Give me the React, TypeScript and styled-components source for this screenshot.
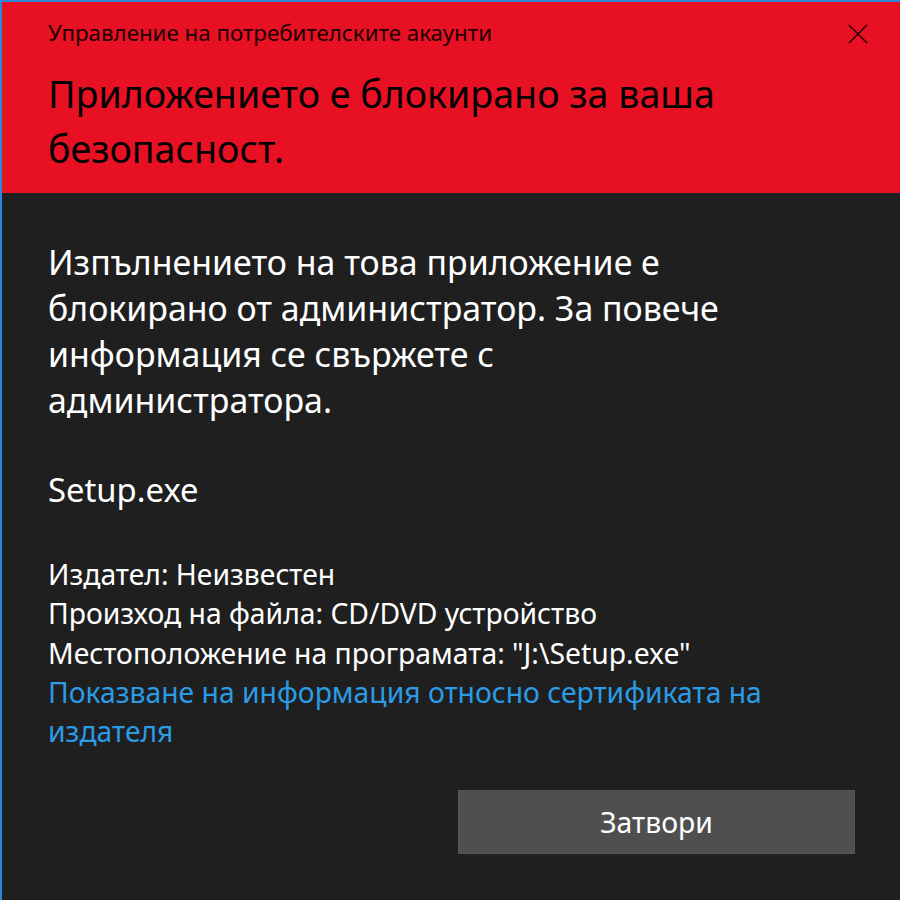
import React from "react";
import styled, { createGlobalStyle } from "styled-components";

const Global = createGlobalStyle`
  html, body { margin: 0; padding: 0; background: #1f1f1f; }
  * { box-sizing: border-box; }
`;

const Window = styled.div`
  width: 900px;
  height: 900px;
  border-left: 2px solid #2b88d8;
  border-top: 2px solid #2b88d8;
  background: #1f1f1f;
  display: flex;
  flex-direction: column;
  font-family: "Noto Sans", "Open Sans", sans-serif;
  overflow: hidden;
`;

const Header = styled.div`
  background: #e81123;
  height: 191px;
  padding: 16px 0 0 46px;
  display: flex;
  flex-direction: column;
  position: relative;
`;

const Caption = styled.div`
  color: #1a0000;
  font-size: 22.3px;
  line-height: 30px;
`;

const Title = styled.h1`
  margin: 18px 0 0;
  color: #000;
  font-size: 37.6px;
  font-weight: 400;
  line-height: 55px;
  max-width: 720px;
`;

const CloseButton = styled.div`
  position: absolute;
  top: 22px;
  right: 32px;
  width: 20px;
  height: 20px;
  display: flex;
  align-items: center;
  justify-content: center;
`;

const Body = styled.div`
  flex: 1;
  display: flex;
  flex-direction: column;
  padding: 46px 0 0 46px;
  color: #fff;
`;

const Message = styled.p`
  margin: 0;
  font-size: 33.9px;
  line-height: 46px;
  max-width: 700px;
`;

const FileName = styled.div`
  margin-top: 47px;
  font-size: 32.8px;
  line-height: 40px;
`;

const Details = styled.div`
  margin-top: 45px;
  display: flex;
  flex-direction: column;
  font-size: 28.3px;
  line-height: 39.3px;
  max-width: 800px;
`;

const Link = styled.span`
  color: #2b9be6;
`;

const Footer = styled.div`
  display: flex;
  justify-content: flex-end;
  padding: 39px 45px 0 0;
`;

const Button = styled.div`
  width: 397px;
  height: 64px;
  background: #4f4f4f;
  border: 1px solid #555;
  color: #fff;
  font-size: 28.3px;
  display: flex;
  align-items: center;
  justify-content: center;
`;

export default function App() {
  return (
    <>
      <Global />
      <Window>
        <Header>
          <Caption>Управление на потребителските акаунти</Caption>
          <Title>Приложението е блокирано за ваша безопасност.</Title>
          <CloseButton>
            <svg width="20" height="20" viewBox="0 0 20 20">
              <path d="M1 1 L19 19 M19 1 L1 19" stroke="#2a0005" strokeWidth="1.6" fill="none" />
            </svg>
          </CloseButton>
        </Header>
        <Body>
          <Message>
            Изпълнението на това приложение е блокирано от администратор. За повече информация се свържете с администратора.
          </Message>
          <FileName>Setup.exe</FileName>
          <Details>
            <span>Издател: Неизвестен</span>
            <span>Произход на файла: CD/DVD устройство</span>
            <span>Местоположение на програмата: "J:\Setup.exe"</span>
            <Link>Показване на информация относно сертификата на издателя</Link>
          </Details>
          <Footer>
            <Button>Затвори</Button>
          </Footer>
        </Body>
      </Window>
    </>
  );
}
